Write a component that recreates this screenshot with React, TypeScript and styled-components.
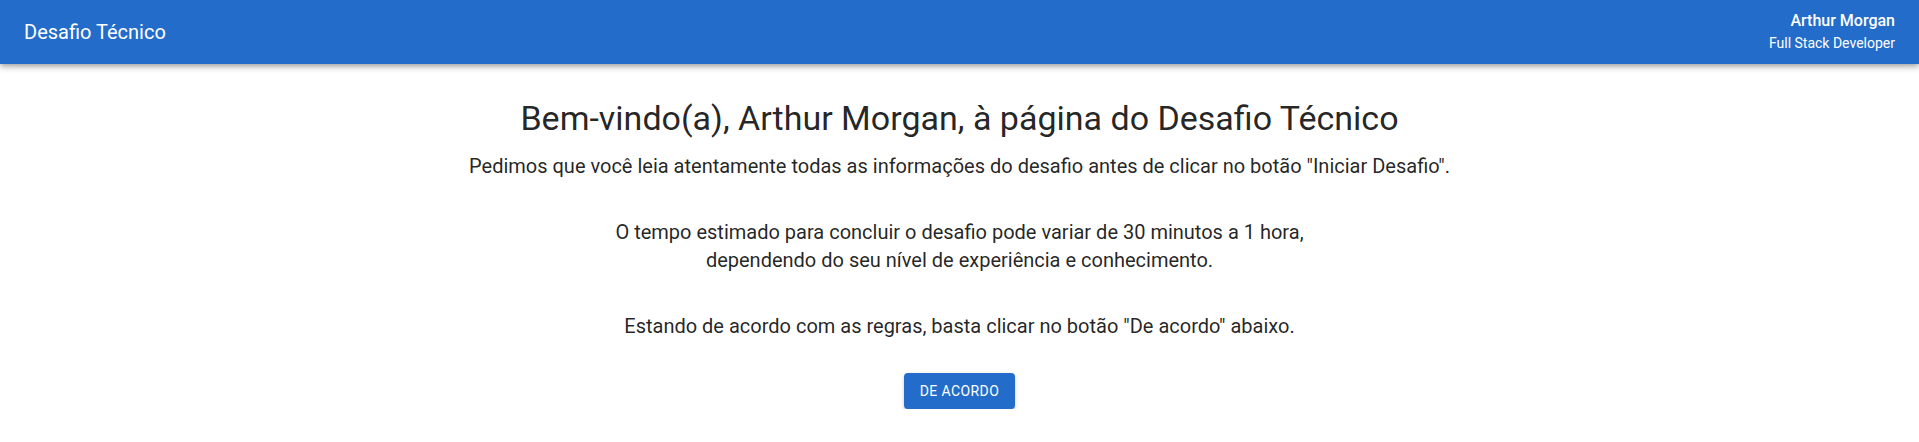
import styled, { createGlobalStyle } from "styled-components"

const GlobalStyle = createGlobalStyle`
    body {
        margin: 0;
        font-family: Roboto, "Liberation Sans", sans-serif;
        background: #ffffff;
        color: rgba(0, 0, 0, 0.87);
    }
`

const AppBar = styled.header`
    display: flex;
    align-items: center;
    justify-content: space-between;
    height: 64px;
    padding: 0 24px;
    background-color: #236cc9;
    color: #ffffff;
    box-shadow: 0px 2px 4px -1px rgba(0,0,0,0.2), 0px 4px 5px 0px rgba(0,0,0,0.14), 0px 1px 10px 0px rgba(0,0,0,0.12);
`

const Title = styled.h6`
    margin: 0;
    font-size: 20px;
    font-weight: 400;
`

const UserBox = styled.div`
    display: flex;
    flex-direction: column;
    align-items: flex-end;
    gap: 2px;
`

const UserName = styled.span`
    font-size: 16px;
    font-weight: 500;
    line-height: 20px;
`

const UserRole = styled.span`
    font-size: 14px;
    font-weight: 400;
    line-height: 20px;
`

const Main = styled.main`
    display: flex;
    flex-direction: column;
    align-items: center;
    text-align: center;
    padding-top: 34px;
`

const Heading = styled.h4`
    margin: 0 0 12px;
    font-size: 34px;
    font-weight: 400;
    line-height: 1.235;
`

const Text = styled.p`
    margin: 0;
    font-size: 20px;
    line-height: 28px;
`

const Spacer = styled.div`
    height: 38px;
`

const Button = styled.button`
    margin-top: 33px;
    height: 36px;
    padding: 6px 16px;
    border: none;
    border-radius: 4px;
    background-color: #236cc9;
    color: #ffffff;
    font-family: Roboto, "Liberation Sans", sans-serif;
    font-size: 14px;
    font-weight: 400;
    letter-spacing: 0.4px;
    text-transform: uppercase;
    box-shadow: 0px 3px 1px -2px rgba(0,0,0,0.2), 0px 2px 2px 0px rgba(0,0,0,0.14), 0px 1px 5px 0px rgba(0,0,0,0.12);
    cursor: pointer;
`

export default function App () {
    return (
        <>
            <GlobalStyle />
            <AppBar>
                <Title>Desafio Técnico</Title>
                <UserBox>
                    <UserName>Arthur Morgan</UserName>
                    <UserRole>Full Stack Developer</UserRole>
                </UserBox>
            </AppBar>
            <Main>
                <Heading>Bem-vindo(a), Arthur Morgan, à página do Desafio Técnico</Heading>
                <Text>Pedimos que você leia atentamente todas as informações do desafio antes de clicar no botão "Iniciar Desafio".</Text>
                <Spacer />
                <Text>O tempo estimado para concluir o desafio pode variar de 30 minutos a 1 hora,</Text>
                <Text>dependendo do seu nível de experiência e conhecimento.</Text>
                <Spacer />
                <Text>Estando de acordo com as regras, basta clicar no botão "De acordo" abaixo.</Text>
                <Button>De acordo</Button>
            </Main>
        </>
    )
}
